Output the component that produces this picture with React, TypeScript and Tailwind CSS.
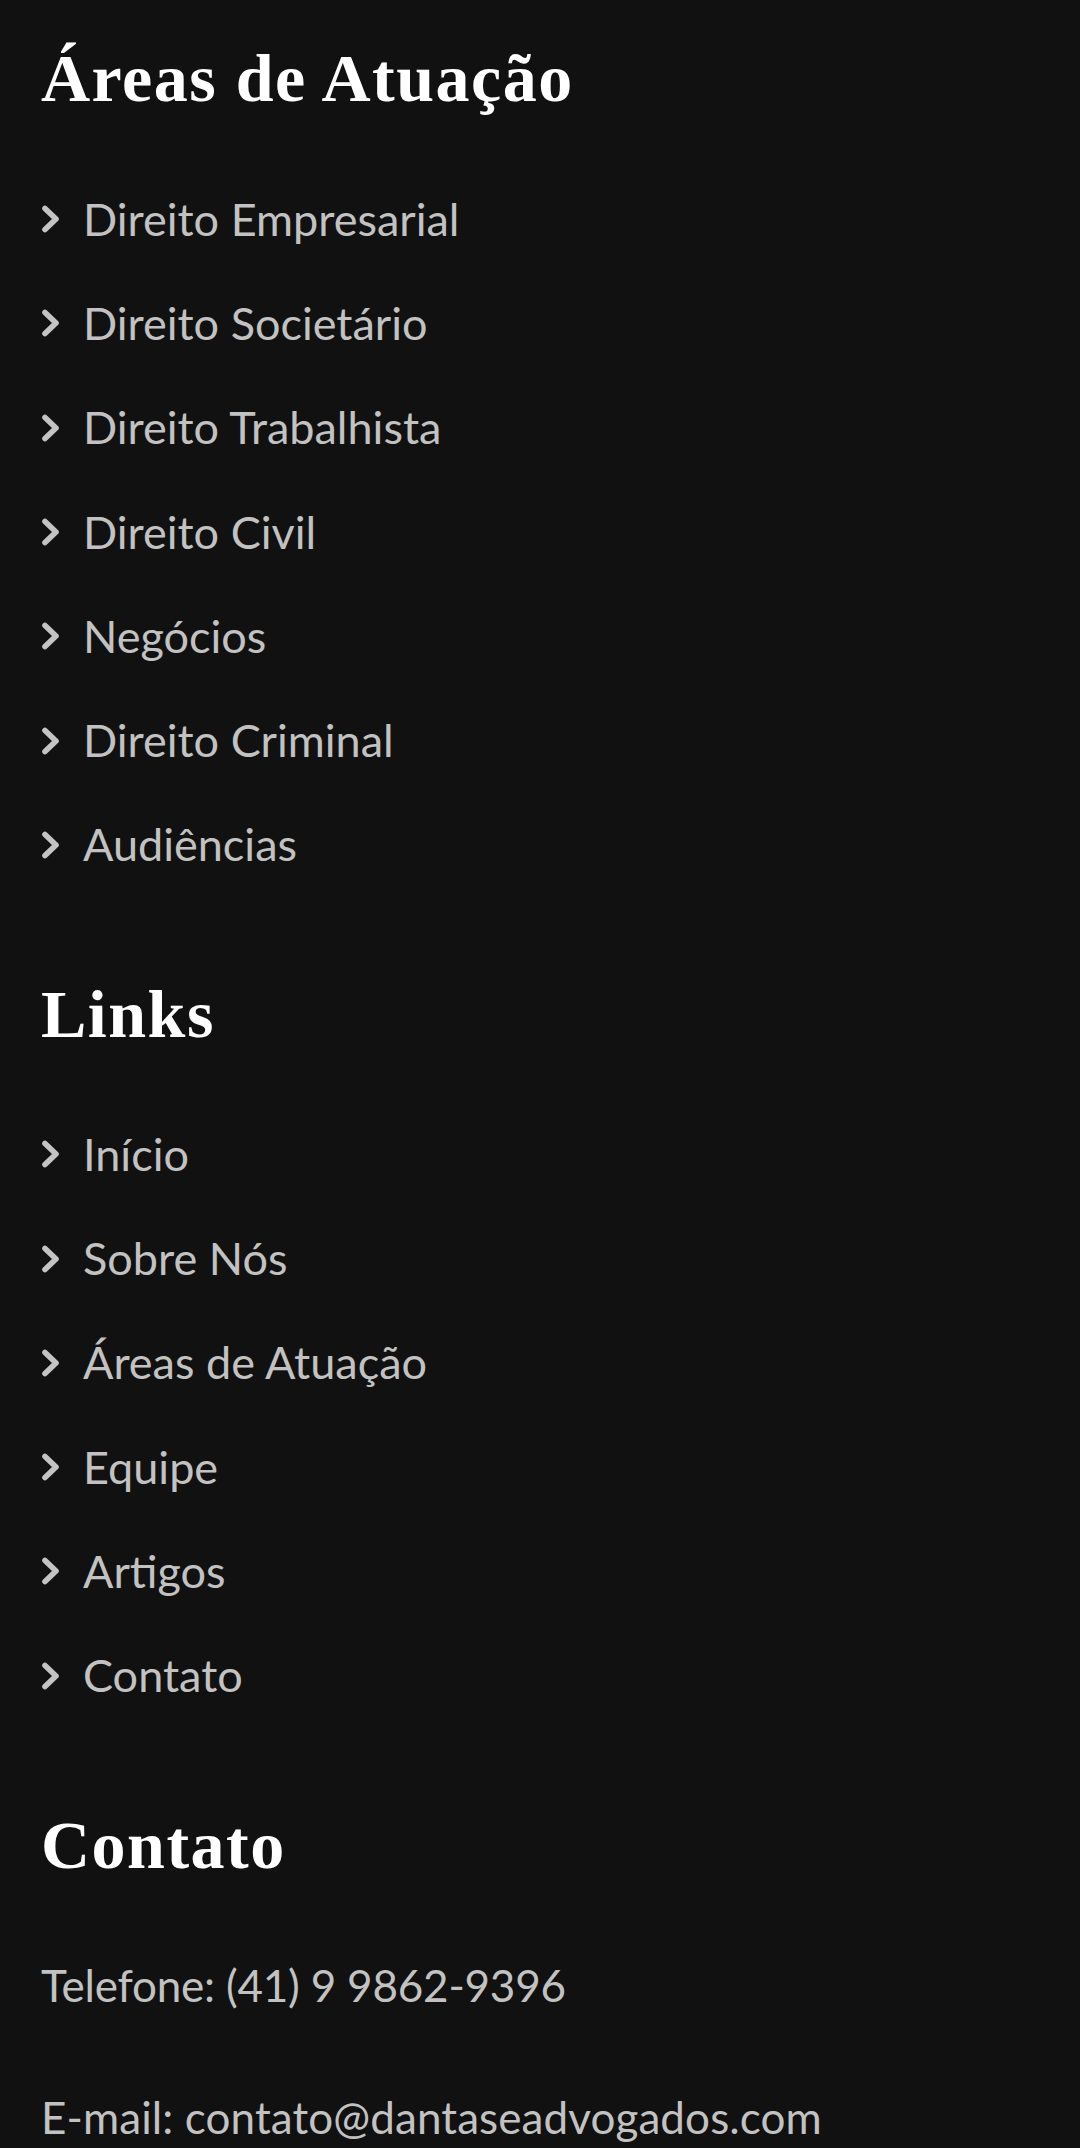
import React from "react";

const areas = [
  "Direito Empresarial",
  "Direito Societário",
  "Direito Trabalhista",
  "Direito Civil",
  "Negócios",
  "Direito Criminal",
  "Audiências",
];

const links = ["Início", "Sobre Nós", "Áreas de Atuação", "Equipe", "Artigos", "Contato"];

function Chevron() {
  return (
    <svg width="20" height="30" viewBox="0 0 20 30" className="shrink-0">
      <polyline
        points="4,4.5 15,15 4,25.5"
        fill="none"
        stroke="#c4c4c4"
        strokeWidth="5.6"
        strokeLinecap="round"
        strokeLinejoin="round"
      />
    </svg>
  );
}

function Heading({ children, className = "" }: { children: React.ReactNode; className?: string }) {
  return (
    <h2
      className={`text-[68px] leading-[60px] font-bold text-white tracking-[1.5px] ${className}`}
      style={{ fontFamily: '"Liberation Serif", "Times New Roman", serif' }}
    >
      {children}
    </h2>
  );
}

function Item({ label }: { label: string }) {
  return (
    <li className="flex h-[104.3px] items-center">
      <Chevron />
      <span className="ml-[22px] text-[45px] leading-none text-[#c2c2c2]">{label}</span>
    </li>
  );
}

export default function App() {
  return (
    <div
      className="min-h-[2148px] w-full bg-[#111111] px-[41px] pt-[48px]"
      style={{ fontFamily: 'Lato, "Open Sans", sans-serif' }}
    >
      <section>
        <Heading>Áreas de Atuação</Heading>
        <ul className="mt-[59px]">
          {areas.map((a) => (
            <Item key={a} label={a} />
          ))}
        </ul>
      </section>
      <section className="mt-[87px]">
        <Heading>Links</Heading>
        <ul className="mt-[58px]">
          {links.map((a) => (
            <Item key={a} label={a} />
          ))}
        </ul>
      </section>
      <section className="mt-[87px]">
        <Heading>Contato</Heading>
        <div className="mt-[84px] flex flex-col gap-[80px] text-[44px] leading-[52px] text-[#c2c2c2]">
          <p className="tracking-[-0.2px]">Telefone: (41) 9 9862-9396</p>
          <p className="tracking-[0.1px]">E-mail: contato@dantaseadvogados.com</p>
        </div>
      </section>
    </div>
  );
}
